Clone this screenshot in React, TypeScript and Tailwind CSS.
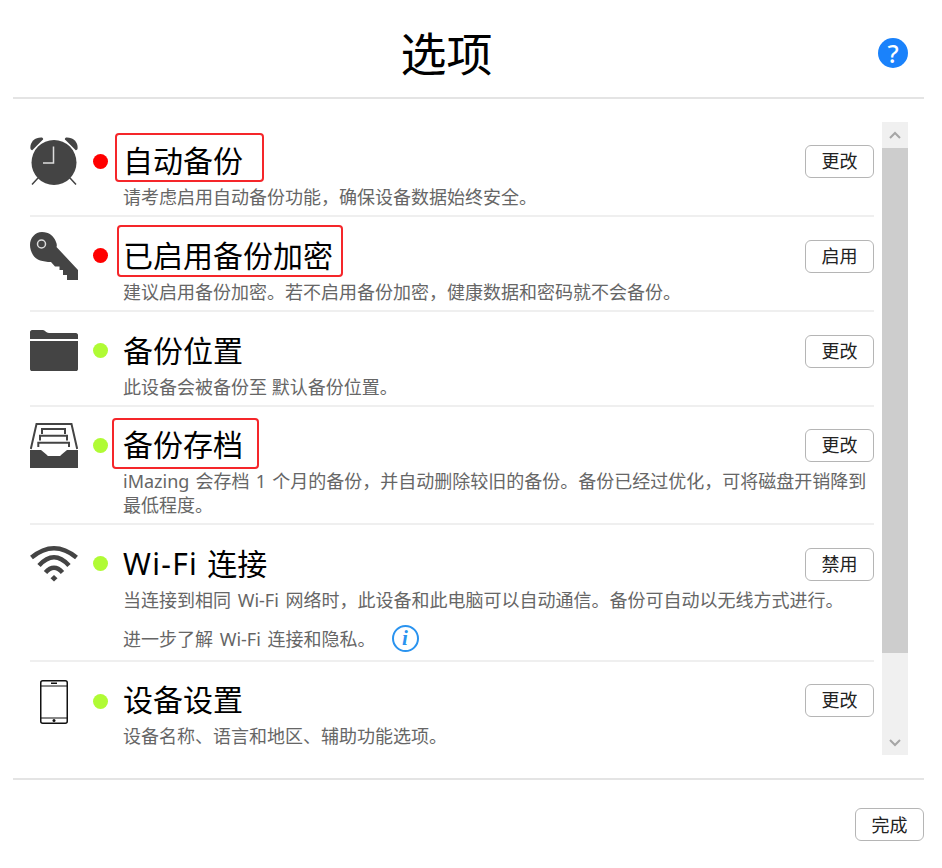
import type { ReactNode } from "react";

const font = "font-['Noto_Sans','Noto_Sans_CJK_SC',sans-serif]";

const AlarmIcon = () => (
  <svg width="48" height="48" viewBox="0 0 48 48">
    <path d="M0.500 12 C-0.500 5 5 0 12 0.500 C13 1 13.500 2 13 2.500 L2.500 13 C2 13.500 1 13 0.500 12Z" fill="#444" />
    <path d="M47.500 12 C48.500 5 43 0 36 0.500 C35 1 34.500 2 35 2.500 L45.500 13 C46 13.500 47 13 47.500 12Z" fill="#444" />
    <circle cx="24" cy="25.500" r="23.500" fill="#fff" />
    <circle cx="24" cy="25.500" r="22.500" fill="#444" />
    <path d="M2 47.500 L8 41 M46 47.500 L40 41" stroke="#444" strokeWidth="1.500" />
    <path d="M23.500 9.500 V26 H13" stroke="#ddd" strokeWidth="1.500" fill="none" />
  </svg>
);

const KeyIcon = () => (
  <svg width="48" height="48" viewBox="0 0 48 48">
    <path
      d="M12 0 C19 0 24 4 26 10 C27 12 27 14 26.500 15 L48 38 V48 H37 V43 H33 V38 H29.500 V34.500 H25 L21 30 C13 30 6 28 3 23 C1 20 0 16 0 13 C0 6 5 0 12 0Z"
      fill="#444"
    />
    <circle cx="11.500" cy="12" r="4" fill="none" stroke="#ddd" strokeWidth="1.500" />
  </svg>
);

const FolderIcon = () => (
  <svg width="48" height="42" viewBox="0 0 48 42">
    <path d="M0 9 V2 C0 1 1 0 2 0 H13 C15 0 16 3 19 3 H46 C47 3 48 4 48 5 V9Z" fill="#444" />
    <path d="M0 11 H48 V39 C48 40.500 47 41 46 41 H2 C1 41 0 40.500 0 39Z" fill="#444" />
  </svg>
);

const TrayIcon = () => (
  <svg width="48" height="46" viewBox="0 0 48 46">
    <path d="M0.800 26 L6.500 1 H41.500 L47.200 26" fill="none" stroke="#444" strokeWidth="2" />
    <path d="M12 11 V6 H35 V11" fill="none" stroke="#444" strokeWidth="2" />
    <path d="M10 17.500 V12.700 H37 V17.500" fill="none" stroke="#444" strokeWidth="2" />
    <path d="M8.300 24 V19.700 H39 V24" fill="none" stroke="#444" strokeWidth="2" />
    <path d="M0 27 H11 L17 32 C17.500 33 18 33 19 33 H29 C30 33 30.500 33 31 32 L37 27 H48 V45 H0Z" fill="#444" />
  </svg>
);

const WifiIcon = () => (
  <svg width="48" height="37" viewBox="0 0 48 37">
    <path d="M1.500 12.500 Q24 -6 46.500 12.500" fill="none" stroke="#444" strokeWidth="4.500" />
    <path d="M9 20.500 Q24 4 39 20.500" fill="none" stroke="#444" strokeWidth="4.500" />
    <path d="M15.500 27.500 Q24 18 32.500 27.500" fill="none" stroke="#444" strokeWidth="4.500" />
    <path d="M24 30 L27.500 33.300 L24 36.500 L20.500 33.300Z" fill="#444" />
  </svg>
);

const PhoneIcon = () => (
  <svg width="28" height="44" viewBox="0 0 28 44">
    <rect x="0.750" y="0.750" width="26.500" height="42.500" rx="2" fill="none" stroke="#111" strokeWidth="1.500" />
    <path d="M1 6 H27 M1 38 H27" stroke="#111" strokeWidth="1" />
    <rect x="11" y="2.500" width="6" height="1.500" fill="#111" />
    <circle cx="14" cy="40.500" r="1.500" fill="#111" />
  </svg>
);

const Chevron = ({ up }: { up?: boolean }) => (
  <svg width="12" height="8" viewBox="0 0 12 8">
    <path d={up ? "M1 7 L6 2 L11 7" : "M1 1 L6 6 L11 1"} fill="none" stroke="#a6a6a6" strokeWidth="2" />
  </svg>
);

const Button = ({ label }: { label: string }) => (
  <button className="w-[69px] h-[33px] shrink-0 rounded-[6px] border border-[#b5b5b5] bg-white text-[18px] leading-none text-[#222]">
    {label}
  </button>
);

const Dot = ({ red }: { red?: boolean }) => (
  <span className={`w-[15px] h-[15px] rounded-full shrink-0 ${red ? "bg-[#ff0000]" : "bg-[#b0fb35]"}`} />
);

type RowProps = {
  icon: ReactNode;
  red?: boolean;
  title: ReactNode;
  action: string;
  box?: string;
  children: ReactNode;
  pad: string;
  dotH: string;
  textPad: string;
  last?: boolean;
};

const Row = ({ icon, red, title, action, box, children, pad, dotH, textPad, last }: RowProps) => (
  <div className={`flex items-start ${pad} ${last ? "" : "border-b-2 border-[#efefef]"}`}>
    <div className="w-[48px] shrink-0 flex justify-center items-start">{icon}</div>
    <div className={`w-[45px] shrink-0 flex justify-center items-center ${dotH}`}>
      <Dot red={red} />
    </div>
    <div className={`flex-1 min-w-0 ${textPad}`}>
      <div className="flex items-center justify-between">
        <div className="relative text-[30px] leading-[36px] text-black">
          {title}
          {box && <div className={`absolute border-2 border-[#f5262a] rounded-[4px] ${box}`} />}
        </div>
        <Button label={action} />
      </div>
      <div className="mt-[6px] text-[18px] leading-[24px] text-[#666]">{children}</div>
    </div>
  </div>
);

export default function App() {
  return (
    <div className={`w-[942px] h-[868px] bg-white overflow-hidden ${font}`}>
      <header className="relative ml-[13px] mr-[18px] h-[99px] border-b-2 border-[#e4e4e4] flex items-center justify-center pt-[8px] pr-[44px]">
        <h1 className="text-[46px] leading-none text-black">选项</h1>
        <span className="absolute right-[16px] top-[38px] w-[30px] h-[30px] rounded-full bg-[#1a82fb] text-white text-[25px] font-medium leading-[30px] text-center">
          ?
        </span>
      </header>

      <main className="flex pl-[30px] pt-[23px] h-[633px] box-content">
        <div className="w-[844px]">
          <Row icon={<AlarmIcon />} red title="自动备份" action="更改" pad="pt-[15px] h-[95px]" dotH="h-[48px]" textPad="pt-[6px]" box="-left-[8px] -top-[10px] w-[149px] h-[49px]">
            请考虑启用自动备份功能，确保设备数据始终安全。
          </Row>
          <Row icon={<KeyIcon />} red title="已启用备份加密" action="启用" pad="pt-[15px] h-[95px]" dotH="h-[47px]" textPad="pt-[6px]" box="-left-[6px] -top-[13px] w-[226px] h-[52px]">
            建议启用备份加密。若不启用备份加密，健康数据和密码就不会备份。
          </Row>
          <Row icon={<FolderIcon />} title="备份位置" action="更改" pad="pt-[18px] h-[95px]" dotH="h-[40px]" textPad="pt-[3px]">
            此设备会被备份至 默认备份位置。
          </Row>
          <Row icon={<TrayIcon />} title="备份存档" action="更改" pad="pt-[16px] h-[118px]" dotH="h-[44px]" textPad="pt-[4px]" box="-left-[11px] -top-[9px] w-[147px] h-[51px]">
            <span className="[word-spacing:1.5px]">
              iMazing 会存档 1 个月的备份，并自动删除较旧的备份。备份已经过优化，可将磁盘开销降到最低程度。
            </span>
          </Row>
          <Row
            icon={<WifiIcon />}
            title={
              <>
                <span className="tracking-[1.3px]">Wi-Fi </span>连接
              </>
            }
            action="禁用"
            pad="pt-[20px] h-[137px]"
            dotH="h-[36px]"
            textPad="pt-[1px]"
          >
            <p className="[word-spacing:2px]">当连接到相同 Wi-Fi 网络时，此设备和此电脑可以自动通信。备份可自动以无线方式进行。</p>
            <p className="mt-[13px] flex items-center [word-spacing:2px]">
              进一步了解 Wi-Fi 连接和隐私。
              <span className="ml-[16px] w-[27px] h-[27px] rounded-full border-2 border-[#2a93ef] text-[#2a93ef] text-[21px] leading-[23px] text-center italic font-bold font-['Liberation_Serif',serif]">
                i
              </span>
            </p>
          </Row>
          <Row icon={<PhoneIcon />} title="设备设置" action="更改" pad="pt-[18px]" dotH="h-[42px]" textPad="pt-[2px]" last>
            设备名称、语言和地区、辅助功能选项。
          </Row>
        </div>

        <div className="ml-[8px] w-[26px] bg-[#f0f0f0] flex flex-col">
          <div className="h-[26px] flex items-center justify-center">
            <Chevron up />
          </div>
          <div className="h-[505px] bg-[#cdcdcd]" />
          <div className="flex-1 flex items-end justify-center pb-[8px]">
            <Chevron />
          </div>
        </div>
      </main>

      <footer className="ml-[13px] mr-[18px] mt-[23px] border-t-2 border-[#e4e4e4] pt-[28px] flex justify-end">
        <Button label="完成" />
      </footer>
    </div>
  );
}
